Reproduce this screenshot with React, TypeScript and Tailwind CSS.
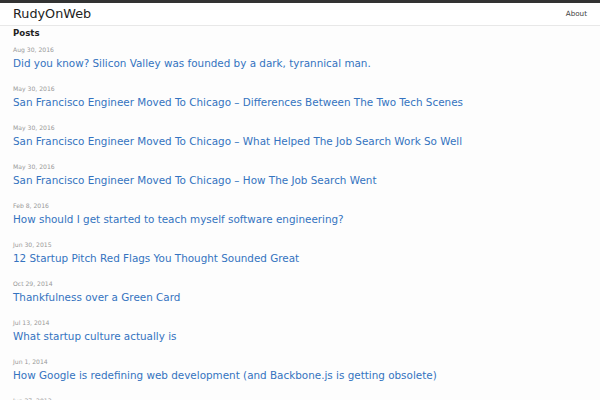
import React from "react";

const posts = [
  ["Aug 30, 2016", "Did you know? Silicon Valley was founded by a dark, tyrannical man."],
  ["May 30, 2016", "San Francisco Engineer Moved To Chicago – Differences Between The Two Tech Scenes"],
  ["May 30, 2016", "San Francisco Engineer Moved To Chicago – What Helped The Job Search Work So Well"],
  ["May 30, 2016", "San Francisco Engineer Moved To Chicago – How The Job Search Went"],
  ["Feb 8, 2016", "How should I get started to teach myself software engineering?"],
  ["Jun 30, 2015", "12 Startup Pitch Red Flags You Thought Sounded Great"],
  ["Oct 29, 2014", "Thankfulness over a Green Card"],
  ["Jul 13, 2014", "What startup culture actually is"],
  ["Jun 1, 2014", "How Google is redefining web development (and Backbone.js is getting obsolete)"],
  ["Jun 27, 2013", "Why I left"],
];

export default function App() {
  return (
    <div className="h-[400px] overflow-hidden bg-[#fdfdfd] text-[#111]" style={{ fontFamily: '"DejaVu Sans", sans-serif' }}>
      <div className="h-[3px] bg-[#333]" />
      <header className="flex h-[23px] items-center justify-between border-b border-[#e8e8e8] bg-white px-[13px]">
        <span className="text-[12.8px] text-[#222]">RudyOnWeb</span>
        <span className="text-[7.2px] text-[#444]">About</span>
      </header>
      <main className="px-[13px]">
        <h2 className="text-[8.6px] font-semibold leading-[14px] text-[#222]">Posts</h2>
        <ul className="mt-[2px]">
          {posts.map(([d, t]) => (
            <li key={d + t} className="h-[39px] pt-[3px]">
              <div className="text-[6.1px] leading-[10px] text-[#999]">{d}</div>
              <a className="block text-[10.4px] leading-[16px] text-[#3473c0]">{t}</a>
            </li>
          ))}
        </ul>
      </main>
    </div>
  );
}
